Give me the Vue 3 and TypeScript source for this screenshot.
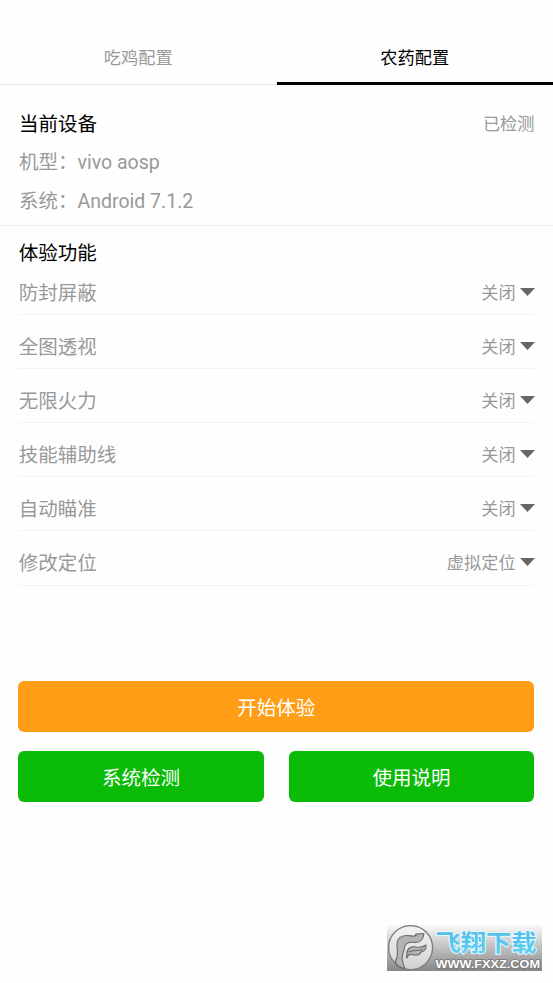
<script setup lang="ts">
import { ref } from 'vue'

interface Feature {
  name: string
  value: string
}

const tabs: string[] = ['吃鸡配置', '农药配置']
const activeTab = ref<number>(1)

const features: Feature[] = [
  { name: '防封屏蔽', value: '关闭' },
  { name: '全图透视', value: '关闭' },
  { name: '无限火力', value: '关闭' },
  { name: '技能辅助线', value: '关闭' },
  { name: '自动瞄准', value: '关闭' },
  { name: '修改定位', value: '虚拟定位' },
]
</script>

<template>
  <main class="screen">
    <nav class="tabs">
      <div
        v-for="(tab, i) in tabs"
        :key="tab"
        class="tab"
        :class="{ active: i === activeTab }"
        @click="activeTab = i"
      >
        {{ tab }}
      </div>
    </nav>

    <section class="device">
      <div class="line">
        <span class="title">当前设备</span>
        <span class="status">已检测</span>
      </div>
      <div class="line info">机型：vivo aosp</div>
      <div class="line info">系统：Android 7.1.2</div>
    </section>

    <section class="features">
      <div class="title heading">体验功能</div>
      <div v-for="f in features" :key="f.name" class="row">
        <span class="label">{{ f.name }}</span>
        <span class="picker">
          <span class="label">{{ f.value }}</span>
          <svg class="caret" viewBox="0 0 15 8"><path d="M0 0H15L7.5 8Z" fill="#666" /></svg>
        </span>
      </div>
    </section>

    <section class="actions">
      <button class="btn primary">开始体验</button>
      <button class="btn">系统检测</button>
      <button class="btn">使用说明</button>
    </section>

    <svg class="watermark" viewBox="0 0 155 46">
      <defs>
        <linearGradient id="plate" x1="0" y1="0" x2="0" y2="1">
          <stop offset="0" stop-color="#f9f9f9" />
          <stop offset="0.5" stop-color="#bfbfbf" />
          <stop offset="1" stop-color="#868686" />
        </linearGradient>
        <linearGradient id="disc" x1="0" y1="0" x2="0" y2="1">
          <stop offset="0" stop-color="#f4f4f4" />
          <stop offset="1" stop-color="#d2d2d2" />
        </linearGradient>
        <linearGradient id="sky" x1="0" y1="0" x2="0" y2="1">
          <stop offset="0" stop-color="#4fb9e6" />
          <stop offset="1" stop-color="#62d3f2" />
        </linearGradient>
      </defs>
      <rect width="155" height="46" fill="url(#plate)" />
      <circle cx="23.6" cy="22.6" r="22" fill="url(#disc)" stroke="#7c7c7c" stroke-width="1.3" />
      <g fill="#b4b4b4" stroke="#686868" stroke-width="1.1" stroke-linejoin="round">
        <path d="M8.5 36C12 30 10 25 10 20C10 13 14 10.5 20 10.5C24 10.5 27 12 29 10.5C27 8.500 32 9 37 8.5C36.5 13 34 17.5 29 17.5C22 16.5 18.5 17.5 17.5 22C17 27 14 31 15.5 36C16 39 17 41 18 43.5C13 43 8 40 8.5 36Z" />
        <path d="M20 28C20 23.5 24 21 29 22C33 22.5 36 22.5 39 20C39.5 24 37 26.5 34 27C33 30 29 30.5 25 29.5C22 29 20.5 31 20 33C19 32 19.5 30 20 28Z" />
        <path d="M21.5 27C26 24.5 30 26.5 36 24.5" fill="none" />
      </g>
      <text class="brand" x="48.5" y="26.2" textLength="101" lengthAdjust="spacingAndGlyphs">飞翔下载</text>
      <text class="site" x="48.5" y="42.7" textLength="104.5" lengthAdjust="spacingAndGlyphs">WWW.FXXZ.COM</text>
    </svg>
  </main>
</template>

<style>
body {
  background: #fefefe;
}
</style>

<style scoped>
.screen {
  box-sizing: border-box;
  height: 983px;
  padding-top: 30px;
  display: flex;
  flex-direction: column;
  overflow: hidden;
  color: #999;
  font-family: Roboto, 'Noto Sans CJK SC', sans-serif;
  font-size: 19.5px;
}

.tabs {
  display: grid;
  grid-template-columns: 1fr 1fr;
  grid-template-rows: 55px;
  font-size: 17.2px;
  line-height: 56px;
  text-align: center;
}

.tab {
  box-sizing: border-box;
  border-bottom: 1px solid #e8e8e8;
}

.tab.active {
  color: #000;
  border-bottom: 3px solid #000;
}

.device {
  padding: 21px 18.5px 2px 19px;
  border-bottom: 1px solid #efefef;
}

.line {
  display: flex;
  justify-content: space-between;
  height: 39px;
  line-height: 38px;
}

.line.info {
  line-height: 36px;
}

.title {
  color: #000;
}

.status {
  font-size: 17.2px;
  line-height: 37px;
}

.features {
  padding: 10px 18.4px 0 18.8px;
}

.heading {
  line-height: 35px;
}

.row {
  box-sizing: border-box;
  display: flex;
  align-items: center;
  justify-content: space-between;
  height: 44.1px;
  border-bottom: 1px solid #f3f3f3;
}

.row + .row {
  margin-top: 10px;
}

.label {
  padding-bottom: 3px;
}

.picker {
  display: flex;
  align-items: center;
  gap: 4px;
  font-size: 17.2px;
}

.caret {
  width: 15px;
  height: 8px;
  margin-bottom: 2px;
}

.actions {
  display: grid;
  grid-template-columns: 1fr 1fr;
  column-gap: 25px;
  row-gap: 19px;
  margin-top: 95px;
  padding: 0 18.6px 0 18.3px;
}

.btn {
  height: 51px;
  padding: 1px 0 0;
  border: 0;
  border-radius: 6px;
  background: #0abb07;
  color: #fff;
  font: inherit;
}

.primary {
  grid-column: 1 / -1;
  background: #ff9d16;
}

.watermark {
  width: 155px;
  height: 46px;
  margin: auto 11px 12px auto;
}

.brand {
  font: 700 23px 'Noto Sans CJK SC', sans-serif;
  fill: url(#sky);
  stroke: #e4f8ff;
  stroke-width: 2px;
  paint-order: stroke;
}

.site {
  font: 700 11px 'Liberation Sans', sans-serif;
  fill: #fff;
  stroke: #777;
  stroke-width: 1.5px;
  paint-order: stroke;
}
</style>
